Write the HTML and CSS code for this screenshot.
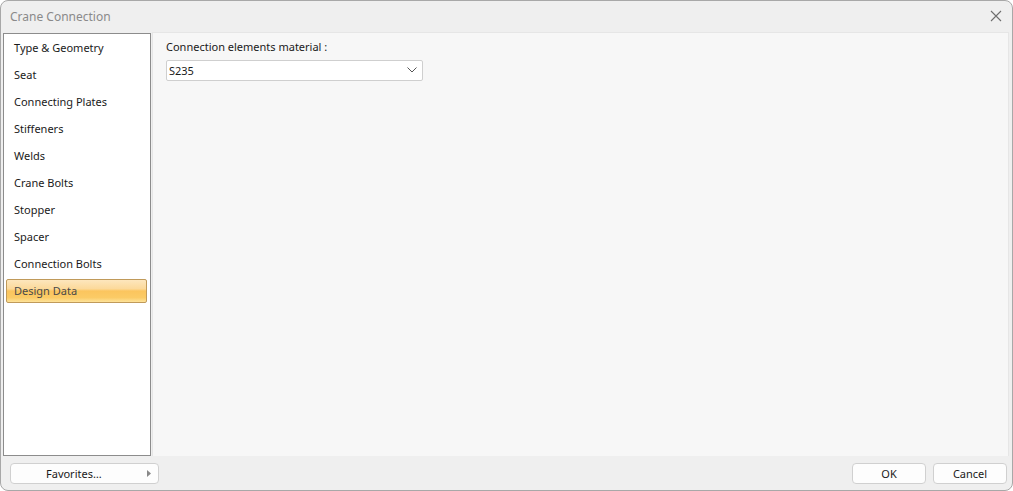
FILE: index.html
```html
<!DOCTYPE html>
<html>
<head>
<meta charset="utf-8">
<link rel="stylesheet" href="styles.css">
</head>
<body>
<div class="window">
  <div class="titlebar">
    <span class="title">Crane Connection</span>
    <svg class="close" width="12" height="12" viewBox="0 0 12 12"><path d="M1 1L11 11M11 1L1 11" stroke="#6e6e6e" stroke-width="1.1" fill="none"/></svg>
  </div>
  <div class="main">
    <div class="nav">
      <div class="item">Type &amp; Geometry</div>
      <div class="item">Seat</div>
      <div class="item">Connecting Plates</div>
      <div class="item">Stiffeners</div>
      <div class="item">Welds</div>
      <div class="item">Crane Bolts</div>
      <div class="item">Stopper</div>
      <div class="item">Spacer</div>
      <div class="item">Connection Bolts</div>
      <div class="item selected">Design Data</div>
    </div>
    <div class="content">
      <div class="label">Connection elements material :</div>
      <div class="select">
        <span>S235</span>
        <svg width="10" height="6" viewBox="0 0 10 6"><path d="M0.5 0.5L5 5L9.5 0.5" stroke="#555" stroke-width="1" fill="none"/></svg>
      </div>
    </div>
  </div>
  <div class="footer">
    <div class="btn fav"><span class="favtext">Favorites…</span><svg class="arrow" width="4" height="7" viewBox="0 0 4 7"><path d="M0 0L4 3.5L0 7Z" fill="#888"/></svg></div>
    <div class="spacer"></div>
    <div class="btn ok">OK</div>
    <div class="btn cancel">Cancel</div>
  </div>
</div>
</body>
</html>
```
FILE: styles.css
```css
html, body {
  margin: 0;
  padding: 0;
  background: #ffffff;
}
body {
  font-family: "Segoe UI", "Noto Sans", "Liberation Sans", sans-serif;
  font-size: 11px;
  color: #1a1a1a;
}
.window {
  box-sizing: border-box;
  width: 1013px;
  height: 491px;
  border: 1px solid #a8a8a8;
  border-radius: 8px;
  background: #efefef;
  display: flex;
  flex-direction: column;
  overflow: hidden;
}
.titlebar {
  height: 31px;
  display: flex;
  align-items: center;
  padding: 0 10px 0 9px;
  flex-shrink: 0;
}
.title {
  color: #8a8a8a;
  font-size: 12px;
  flex: 1;
  margin-top: -1px;
}
.close {
  margin-top: -2px;
}
.main {
  display: flex;
  height: 424px;
  padding: 0 3px 0 2px;
  gap: 1px;
  flex-shrink: 0;
}
.nav {
  box-sizing: border-box;
  width: 148px;
  height: 423px;
  margin-top: 1px;
  background: #ffffff;
  border: 1px solid #8c8c8c;
  padding: 2px 3px 0 2px;
}
.item {
  box-sizing: border-box;
  height: 24px;
  margin-bottom: 3px;
  padding-left: 8px;
  padding-bottom: 2px;
  display: flex;
  align-items: center;
  color: #1a1a1a;
}
.item.selected {
  padding-left: 7px;
  border: 1px solid #c09a5a;
  border-radius: 2px;
  background: linear-gradient(#fde6bd 0%, #fcd99a 40%, #fbc55e 50%, #fbcb66 80%, #fde39a 100%);
  color: #4a4a4a;
}
.content {
  flex: 1;
  box-sizing: border-box;
  background: #f7f7f7;
  border: 1px solid #e6e6e6;
  border-bottom: none;
  padding: 6px 13px;
}
.label {
  height: 16px;
  line-height: 15px;
}
.select {
  box-sizing: border-box;
  width: 257px;
  height: 21px;
  margin-top: 5px;
  background: #ffffff;
  border: 1px solid #cfcfcf;
  border-radius: 2px;
  display: flex;
  align-items: center;
  justify-content: space-between;
  padding: 0 5px 1px 2px;
}
.footer {
  flex: 1;
  display: flex;
  align-items: center;
  padding: 0 5px 0 9px;
  gap: 7px;
}
.spacer {
  flex: 1;
}
.btn {
  box-sizing: border-box;
  height: 21px;
  background: #fdfdfd;
  border: 1px solid #d0d0d0;
  border-radius: 4px;
  display: flex;
  align-items: center;
  justify-content: center;
  color: #1a1a1a;
}
.fav {
  width: 149px;
  position: relative;
  justify-content: flex-start;
  padding-left: 35px;
}
.arrow {
  position: absolute;
  right: 7px;
  top: 6px;
}
.ok, .cancel {
  width: 74px;
}
```
